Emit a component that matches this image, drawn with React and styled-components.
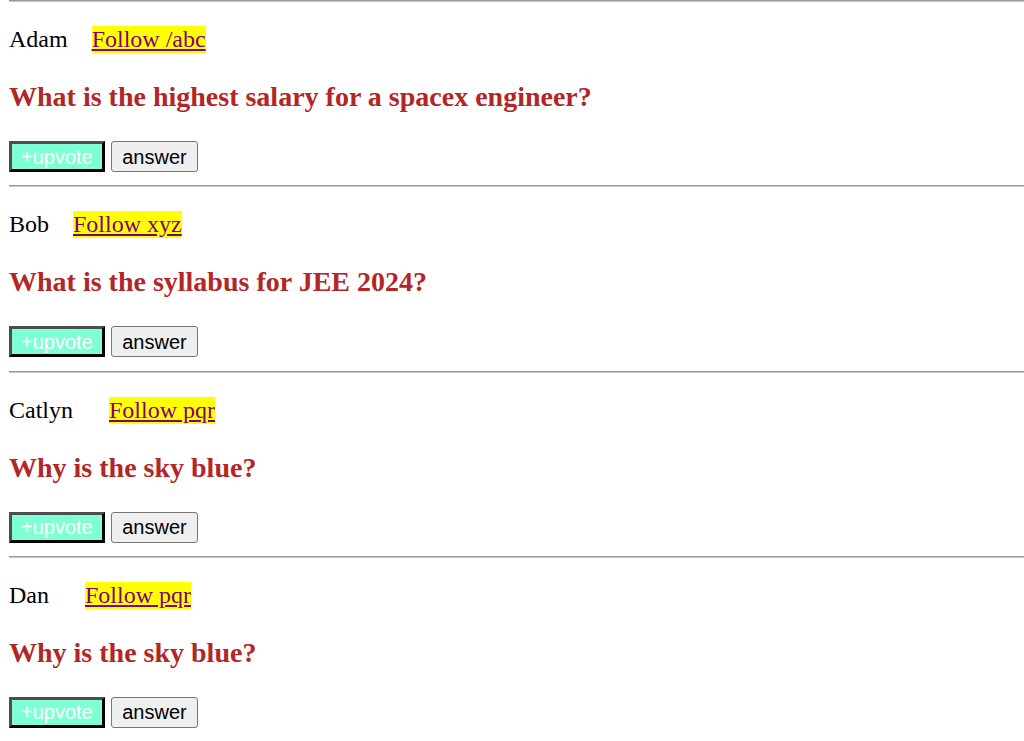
import React from "react";
import styled, { createGlobalStyle } from "styled-components";

const questions = [
  { name: "Adam", follow: "Follow /abc", gap: 24, text: "What is the highest salary for a spacex engineer?" },
  { name: "Bob", follow: "Follow xyz", gap: 24, text: "What is the syllabus for JEE 2024?" },
  { name: "Catlyn", follow: "Follow pqr", gap: 36, text: "Why is the sky blue?" },
  { name: "Dan", follow: "Follow pqr", gap: 36, text: "Why is the sky blue?" },
];

const App = () => {
  return (
    <>
      <GlobalStyle />
      <Feed>
        {questions.map((q, i) => (
          <Post key={i}>
            <Divider />
            <Author gap={q.gap}>
              <span>{q.name}</span>
              <FollowLink href="#">{q.follow}</FollowLink>
            </Author>
            <Question>{q.text}</Question>
            <Actions>
              <UpvoteButton>+upvote</UpvoteButton>
              <AnswerButton>answer</AnswerButton>
            </Actions>
          </Post>
        ))}
      </Feed>
    </>
  );
};

const GlobalStyle = createGlobalStyle`
  body {
    margin: 0;
    background: #fff;
    font-family: "Liberation Serif", "Times New Roman", serif;
    overflow: hidden;
  }
`;

const Feed = styled.div`
  padding-left: 9px;
`;

const Post = styled.div`
  padding-bottom: 13.33px;
`;

const Divider = styled.div`
  height: 0;
  border-top: 1px solid #9a9a9a;
  border-bottom: 1px solid #c8c8c8;
`;

const Author = styled.div`
  display: flex;
  gap: ${({ gap }) => gap}px;
  margin-top: 24px;
  font-size: 24px;
  line-height: 27px;
  color: #000;
`;

const FollowLink = styled.a`
  color: #800080;
  background-color: yellow;
  text-decoration: underline;
`;

const Question = styled.h2`
  margin: 28px 0 28px;
  font-size: 28px;
  line-height: 32px;
  font-weight: bold;
  color: #b32626;
`;

const Actions = styled.div`
  display: flex;
  gap: 6px;
  height: 31px;
`;

const UpvoteButton = styled.button`
  box-sizing: border-box;
  height: 31px;
  padding: 1px 9px 0;
  background: #7fffd4;
  color: #fff;
  border: 3px solid;
  border-color: #4d4d4d #000 #000 #4d4d4d;
  font-family: "Liberation Sans", Arial, sans-serif;
  font-size: 20px;
`;

const AnswerButton = styled.button`
  box-sizing: border-box;
  height: 31px;
  padding: 1px 10.5px 0;
  background: #efefef;
  color: #000;
  border: 1px solid #767676;
  border-radius: 3px;
  font-family: "Liberation Sans", Arial, sans-serif;
  font-size: 20px;
`;

export default App;
